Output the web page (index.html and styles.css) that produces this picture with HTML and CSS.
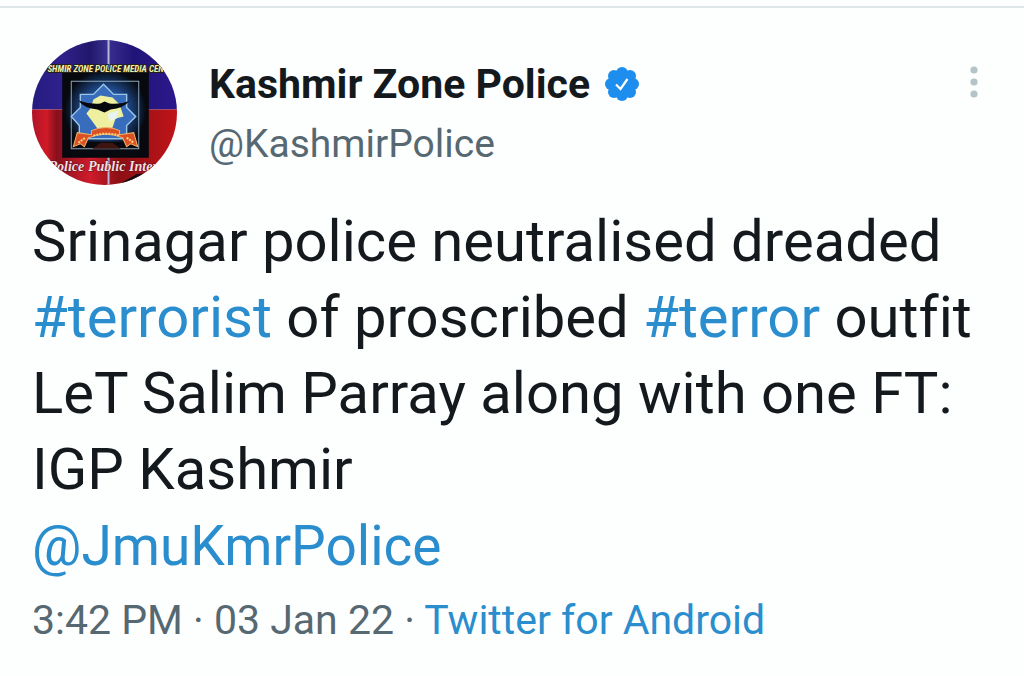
FILE: index.html
```html
<!DOCTYPE html>
<html lang="en">
<head>
<meta charset="utf-8">
<meta name="viewport" content="width=device-width, initial-scale=1">
<title>Kashmir Zone Police</title>
<link rel="stylesheet" href="styles.css">
</head>
<body>
<article class="tweet">
  <header class="tweet-header">
    <svg class="avatar" viewBox="0 0 144 144" role="img" aria-label="Kashmir Zone Police logo">
      <defs>
        <clipPath id="disc"><circle cx="72" cy="72" r="72"/></clipPath>
        <linearGradient id="blue" x1="0" x2="1"><stop offset="0" stop-color="#241c80"/><stop offset=".2" stop-color="#30208c"/><stop offset=".4" stop-color="#21186c"/><stop offset=".52" stop-color="#3a3090"/><stop offset=".7" stop-color="#211478"/><stop offset="1" stop-color="#2c188c"/></linearGradient>
        <linearGradient id="red" x1="0" x2="1"><stop offset="0" stop-color="#b01428"/><stop offset=".1" stop-color="#d01a28"/><stop offset=".17" stop-color="#86101c"/><stop offset=".4" stop-color="#d01c2c"/><stop offset=".6" stop-color="#8c1014"/><stop offset="1" stop-color="#c01418"/></linearGradient>
        <radialGradient id="glow"><stop offset="0" stop-color="#4a86d8"/><stop offset=".55" stop-color="#1f4a8c"/><stop offset="1" stop-color="#070b13"/></radialGradient>
      </defs>
      <g clip-path="url(#disc)">
        <path fill="url(#blue)" d="M0 0h144v69H0z"/>
        <path fill="url(#red)" d="M0 69h144v75H0z"/>
        <path stroke="#b9b4d8" stroke-width="2" d="M76 0v144"/>
        <path fill="#07090e" d="M30 30h86v87H30z"/>
        <circle cx="73" cy="70" r="40" fill="url(#glow)"/>
        <path fill="#080a10" d="M42 101h62v14H42z"/>
        <path fill="none" stroke="#8aa5b8" d="M39 41h67v67H39z"/>
        <path fill="#386cbc" stroke="#9ac5e6" stroke-width="1.4" d="M71 44l10 10h13v13l9 9-9 9v13H47V85l-8-9 9-9V54h13z"/>
        <path fill="#eef0a0" d="M61 59l7-4 12 2 7 7 4 12-8 2-3 9-7 4-8-3-5-7-6-8 4-5z"/>
        <path fill="#e7f3ef" d="M75 73l11-3-2 8-7 3z"/>
        <path fill="#05080c" d="M46 60q11 4 22 3l4-2 5 2q12 1 20-3-6 8-19 9l-6 3-7-3q-13-1-19-9z"/>
        <path fill="#dc5124" stroke="#f3b166" d="M41 106l4-14 14 2v-4q15-6 28 0v4l14-2 4 14-7-3-4 3-4-9q-17-7-34 0l-4 9-4-3z"/>
        <path fill="none" stroke="#ffd37a" stroke-width="2" stroke-dasharray="2 1" d="M61 95q13-4 26 0M46 102l7-5M94 97l7 5"/>
        <path fill="#3d1510" d="M60 108l8-6h12l8 6z"/>
        <path fill="#141015" d="M85 144l19-11 40-3v14z"/>
        <text class="avatar-title" x="73" y="32">SHMIR ZONE POLICE MEDIA CEN</text>
        <text class="avatar-motto" x="73" y="130">Police Public Interf</text>
      </g>
    </svg>
    <div class="author">
      <div class="name-row">
        <span class="name">Kashmir Zone Police</span>
        <svg class="badge" viewBox="0 0 36 36" role="img" aria-label="Verified account">
          <g fill="#1d8eee"><circle cx="18" cy="18" r="14"/><circle cx="18" cy="7" r="6"/><circle cx="26" cy="10" r="6"/><circle cx="29" cy="18" r="6"/><circle cx="26" cy="26" r="6"/><circle cx="18" cy="29" r="6"/><circle cx="10" cy="26" r="6"/><circle cx="7" cy="18" r="6"/><circle cx="10" cy="10" r="6"/></g>
          <path fill="none" stroke="#fff" stroke-width="2.200" d="M12 18.500l4.500 4.500 7-10"/>
        </svg>
      </div>
      <a class="handle" href="#profile">@KashmirPolice</a>
    </div>
    <button class="more" type="button" aria-label="More options">
      <svg class="more-icon" viewBox="0 0 8 34" aria-hidden="true"><g fill="#b4c3c8"><circle cx="4" cy="5" r="3.600"/><circle cx="4" cy="17" r="3.600"/><circle cx="4" cy="29" r="3.600"/></g></svg>
    </button>
  </header>
  <p class="tweet-text">Srinagar police neutralised dreaded <a href="#terrorist">#terrorist</a> of proscribed <a href="#terror">#terror</a> outfit LeT Salim Parray along with one FT: IGP Kashmir<br><a class="mention" href="#mention">@JmuKmrPolice</a></p>
  <footer class="meta"><time datetime="2022-01-03T15:42">3:42 PM · 03 Jan 22</time> · <a href="#source">Twitter for Android</a></footer>
</article>
</body>
</html>
```
FILE: styles.css
```css
* { box-sizing: border-box; }
body {
  margin: 0;
  padding-top: 6px;
  background: #fdfefe;
  color: #14191d;
  font-family: Roboto, "Liberation Sans", sans-serif;
  font-variant-ligatures: none;
}
a { color: #2a8dcd; text-decoration: none; }
.tweet {
  border-top: 2px solid #dfe6e8;
  padding: 32px 32px 0;
}
.tweet-header {
  display: flex;
  align-items: flex-start;
}
.avatar { width: 145px; height: 145px; flex: none; }
.avatar-title {
  font: italic bold 9px "Liberation Sans Narrow", "Roboto Condensed", Lato, sans-serif;
  text-anchor: middle;
  fill: #f3efac;
  stroke: #252018;
  stroke-width: 2px;
  paint-order: stroke;
}
.avatar-motto {
  font: italic bold 14px "Liberation Serif", serif;
  text-anchor: middle;
  fill: #f4dfe2;
  stroke: #601018;
  stroke-width: 1px;
  paint-order: stroke;
}
.author { flex: 1; padding: 20px 0 0 32px; }
.name-row { display: flex; align-items: center; gap: 14px; }
.name { font-size: 41px; line-height: 48px; font-weight: 700; }
.badge { width: 36px; height: 36px; }
.handle {
  display: block;
  margin-top: 12px;
  color: #566871;
  font-size: 39px;
  line-height: 48px;
}
.more {
  padding: 25px 14px;
  border: 0;
  background: none;
}
.more-icon { display: block; width: 8px; height: 34px; }
.tweet-text {
  margin: 18px 0 0;
  font-size: 58px;
  line-height: 76px;
}
.mention { font-size: 55px; }
.meta {
  margin-top: 12px;
  color: #566871;
  font-size: 41px;
  line-height: 48px;
}
```
